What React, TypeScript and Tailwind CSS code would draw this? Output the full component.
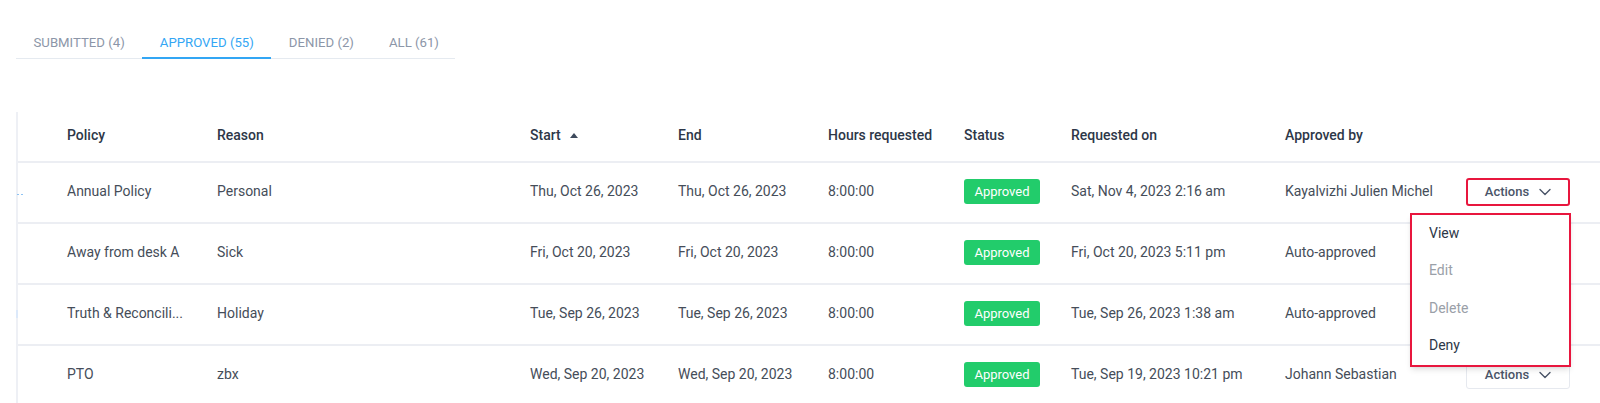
import React from "react";

type Row = {
  policy: string;
  reason: string;
  start: string;
  end: string;
  hours: string;
  requested: string;
  approvedBy: string;
};

const rows: Row[] = [
  { policy: "Annual Policy", reason: "Personal", start: "Thu, Oct 26, 2023", end: "Thu, Oct 26, 2023", hours: "8:00:00", requested: "Sat, Nov 4, 2023 2:16 am", approvedBy: "Kayalvizhi Julien Michel" },
  { policy: "Away from desk A", reason: "Sick", start: "Fri, Oct 20, 2023", end: "Fri, Oct 20, 2023", hours: "8:00:00", requested: "Fri, Oct 20, 2023 5:11 pm", approvedBy: "Auto-approved" },
  { policy: "Truth & Reconcili...", reason: "Holiday", start: "Tue, Sep 26, 2023", end: "Tue, Sep 26, 2023", hours: "8:00:00", requested: "Tue, Sep 26, 2023 1:38 am", approvedBy: "Auto-approved" },
  { policy: "PTO", reason: "zbx", start: "Wed, Sep 20, 2023", end: "Wed, Sep 20, 2023", hours: "8:00:00", requested: "Tue, Sep 19, 2023 10:21 pm", approvedBy: "Johann Sebastian" },
];

const tabs = [
  { label: "SUBMITTED (4)", active: false },
  { label: "APPROVED (55)", active: true },
  { label: "DENIED (2)", active: false },
  { label: "ALL (61)", active: false },
];

const cols = "grid grid-cols-[49px_150px_313px_148px_150px_136px_107px_214px_182px_103px_1fr] items-center";

const Chevron = () => (
  <svg width="12" height="8" viewBox="0 0 12 8" fill="none">
    <polyline points="1,1.5 6,6.5 11,1.5" stroke="#4a5568" strokeWidth="1.4" strokeLinecap="round" strokeLinejoin="round" />
  </svg>
);

function ActionsButton({ highlighted }: { highlighted?: boolean }) {
  return (
    <button
      className={
        "flex h-[28px] w-[104px] items-center justify-center gap-[10px] rounded-[3px] bg-white text-[13px] font-medium text-[#4a5568] " +
        (highlighted ? "border-2 border-[#e8163e]" : "border border-[#e6e9ef]")
      }
    >
      Actions
      <Chevron />
    </button>
  );
}

export default function App() {
  return (
    <div className="min-h-[403px] w-full overflow-hidden bg-white font-['Roboto',sans-serif] text-[14px]">
      <div className="ml-4 mt-[26px] flex w-[439px] border-b border-[#e5eaf0]">
        {tabs.map((t) => (
          <div
            key={t.label}
            className={
              "-mb-px flex h-[33px] shrink-0 items-center whitespace-nowrap border-b-2 px-[17.5px] pt-[2px] text-[13.2px] " +
              (t.active ? "border-[#33a6f4] text-[#33a6f4]" : "border-transparent text-[#8c96a8]")
            }
          >
            {t.label}
          </div>
        ))}
      </div>

      <div className="ml-4 mt-[53px] border-l-2 border-[#eef0f5]">
        <div className={cols + " h-[51px] border-b-2 border-[#eceef3] pb-[2px] font-medium text-[#2d3748]"}>
          <div />
          <div>Policy</div>
          <div>Reason</div>
          <div className="flex items-center gap-[9px]">
            Start
            <svg width="8" height="5" viewBox="0 0 8 5">
              <polygon points="0,5 4,0 8,5" fill="#3d4a5c" />
            </svg>
          </div>
          <div>End</div>
          <div>Hours requested</div>
          <div>Status</div>
          <div>Requested on</div>
          <div>Approved by</div>
          <div />
          <div />
        </div>

        {rows.map((r, i) => (
          <div key={i} className={cols + " h-[61px] border-b-2 border-[#eceef3] pb-[2px] text-[#454d59]"}>
            <div className="relative h-full">
              {i === 0 && (
                <div className="absolute left-[-1px] top-[31px] flex gap-[2px]">
                  <span className="h-[1px] w-[2px] bg-[#8ec3f3]" />
                  <span className="h-[1px] w-[2px] bg-[#8ec3f3]" />
                </div>
              )}
              {i === 2 && <div className="absolute left-[-2px] top-[25px] h-[8px] w-[2px] bg-[#dce9fa]" />}
            </div>
            <div className="whitespace-nowrap">{r.policy}</div>
            <div>{r.reason}</div>
            <div>{r.start}</div>
            <div>{r.end}</div>
            <div>{r.hours}</div>
            <div>
              <span className="flex h-[25px] w-[76px] items-center justify-center rounded-[3px] bg-[#22cc6b] text-[13px] text-white">
                Approved
              </span>
            </div>
            <div className="whitespace-nowrap">{r.requested}</div>
            <div className="whitespace-nowrap">{r.approvedBy}</div>
            <div className="relative -ml-px">
              {(i === 0 || i === 3) && <ActionsButton highlighted={i === 0} />}
              {i === 0 && (
                <div className="absolute right-[-1px] top-[35px] z-10 w-[161px] border-2 border-[#e8163e] bg-white shadow-md">
                  <div className="flex h-[37.5px] items-center pl-[17px] text-[#2d3748]">View</div>
                  <div className="flex h-[37.5px] items-center pl-[17px] text-[#9aa0a8]">Edit</div>
                  <div className="flex h-[37.5px] items-center pl-[17px] text-[#9aa0a8]">Delete</div>
                  <div className="flex h-[37.5px] items-center pl-[17px] text-[#2d3748]">Deny</div>
                </div>
              )}
            </div>
            <div />
          </div>
        ))}
      </div>
    </div>
  );
}
